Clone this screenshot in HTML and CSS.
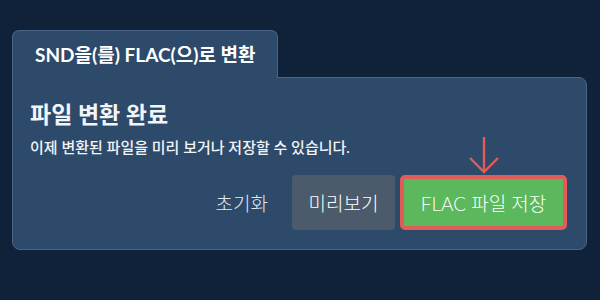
FILE: index.html
```html
<!DOCTYPE html>
<html lang="ko">
<head>
    <meta charset="UTF-8">
    <meta name="viewport" content="width=device-width, initial-scale=1.0">
    <title>SND을(를) FLAC(으)로 변환</title>
    <link rel="stylesheet" href="styles.css">
</head>
<body>
    <div class="converter">
        <div class="tab">SND을(를) FLAC(으)로 변환</div>
        <section class="panel">
            <h2>파일 변환 완료</h2>
            <p class="desc">이제 변환된 파일을 미리 보거나 저장할 수 있습니다.</p>
            <div class="actions">
                <button class="btn btn-reset">초기화</button>
                <button class="btn btn-preview">미리보기</button>
                <div class="save-wrap">
                    <svg class="hint-arrow" width="32" height="38" viewBox="0 0 32 38">
                        <path d="M16 1 V36 M2 22 L16 36 L30 22" fill="none" stroke="#e05c58" stroke-width="2.4"/>
                    </svg>
                    <button class="btn btn-save">FLAC 파일 저장</button>
                </div>
            </div>
        </section>
    </div>
</body>
</html>
```

FILE: styles.css
```css
body {
    margin: 0;
    background-color: #10223a;
    font-family: 'Lato', 'Noto Sans CJK KR', sans-serif;
    color: #ffffff;
}
.converter {
    padding: 30px 13px 0 12px;
}
.tab {
    width: 266px;
    height: 48px;
    box-sizing: border-box;
    padding-left: 22px;
    line-height: 47px;
    font-size: 19px;
    font-weight: bold;
    background-color: #2d4a6a;
    border: 1px solid #4a6585;
    border-bottom: none;
    border-radius: 7px 7px 0 0;
    position: relative;
    z-index: 1;
    margin-bottom: -1px;
}
.panel {
    height: 173px;
    box-sizing: border-box;
    background-color: #2d4a6a;
    border: 1px solid #4a6585;
    border-radius: 0 8px 8px 8px;
    padding: 20px 19px 0 17px;
}
.panel h2 {
    margin: 0;
    font-size: 23px;
    font-weight: bold;
    line-height: 32px;
    color: #f2f4f7;
}
.desc {
    margin: 6px 0 0;
    font-size: 15px;
    font-weight: 500;
    color: #f2f4f7;
}
.actions {
    display: flex;
    justify-content: flex-end;
    align-items: center;
    gap: 5px;
    margin-top: 18px;
}
.btn {
    font-family: inherit;
    font-size: 19px;
    color: #ffffff;
    border: none;
    border-radius: 4px;
    height: 55px;
    cursor: pointer;
}
.btn-reset {
    background: none;
    color: #e4e8ee;
    font-weight: 300;
    padding: 0 19px;
}
.btn-preview {
    width: 103px;
    font-weight: 300;
    background-color: #4b5b6c;
}
.save-wrap {
    position: relative;
}
.btn-save {
    width: 167px;
    background-color: #5cb85c;
    border: 4px solid #e05c58;
    border-radius: 5px;
    font-weight: 300;
}
.hint-arrow {
    position: absolute;
    left: 68px;
    top: -39px;
}
```
